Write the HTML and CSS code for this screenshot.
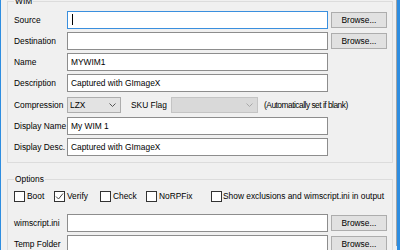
FILE: index.html
```html
<!DOCTYPE html>
<html lang="en">
<head>
<meta charset="UTF-8">
<title>GImageX - Capture</title>
<link rel="stylesheet" href="styles.css">
</head>
<body>
<div class="window">
    <div class="dialog">
        <fieldset class="group group-wim">
            <legend>WIM</legend>
            <div class="row">
                <span class="label">Source</span>
                <div class="textbox focused"><span class="caret"></span></div>
                <button class="browse">Browse...</button>
            </div>
            <div class="row">
                <span class="label">Destination</span>
                <div class="textbox"></div>
                <button class="browse">Browse...</button>
            </div>
            <div class="row">
                <span class="label">Name</span>
                <div class="textbox">MYWIM1</div>
            </div>
            <div class="row">
                <span class="label">Description</span>
                <div class="textbox">Captured with GImageX</div>
            </div>
            <div class="row row-combo">
                <span class="label">Compression</span>
                <div class="combo combo-compression">
                    <span class="combo-text">LZX</span>
                    <svg class="chevron" width="7" height="4" viewBox="0 0 7 4"><polyline points="0.5,0.5 3.5,3.5 6.5,0.5" fill="none" stroke="currentColor" stroke-width="1"/></svg>
                </div>
                <span class="sku-label">SKU Flag</span>
                <div class="combo combo-sku disabled">
                    <span class="combo-text"></span>
                    <svg class="chevron" width="7" height="4" viewBox="0 0 7 4"><polyline points="0.5,0.5 3.5,3.5 6.5,0.5" fill="none" stroke="currentColor" stroke-width="1"/></svg>
                </div>
                <span class="hint">(Automatically set if blank)</span>
            </div>
            <div class="row">
                <span class="label">Display Name</span>
                <div class="textbox">My WIM 1</div>
            </div>
            <div class="row">
                <span class="label">Display Desc.</span>
                <div class="textbox">Captured with GImageX</div>
            </div>
        </fieldset>

        <fieldset class="group group-options">
            <legend>Options</legend>
            <div class="checks">
                <label class="check check-boot"><span class="box"></span>Boot</label>
                <label class="check check-verify"><span class="box checked"><svg width="9" height="9" viewBox="0 0 9 9"><polyline points="1,4.5 3.5,7 8,1.5" fill="none" stroke="currentColor" stroke-width="1"/></svg></span>Verify</label>
                <label class="check check-check"><span class="box"></span>Check</label>
                <label class="check check-norpfix"><span class="box"></span>NoRPFix</label>
                <label class="check check-show"><span class="box"></span>Show exclusions and wimscript.ini in output</label>
            </div>
            <div class="row">
                <span class="label">wimscript.ini</span>
                <div class="textbox"></div>
                <button class="browse">Browse...</button>
            </div>
            <div class="row">
                <span class="label">Temp Folder</span>
                <div class="textbox"></div>
                <button class="browse">Browse...</button>
            </div>
        </fieldset>
    </div>
</div>
</body>
</html>
```

FILE: styles.css
```css
body {
    margin: 0;
    padding: 0;
    font-family: 'Liberation Sans', Arial, sans-serif;
    font-size: 8.4px;
    color: #000;
    background-color: #f0f0f0;
}
.window {
    width: 400px;
    height: 250px;
    box-sizing: border-box;
    border-left: 1px solid #2e8de0;
    border-right: 3px solid #2e8de0;
    background-color: #f0f0f0;
    overflow: hidden;
}
.dialog {
    height: 100%;
    border-right: 1px solid #a3a3a3;
}
.group {
    width: 386px;
    box-sizing: border-box;
    margin: 0 0 0 6px;
    padding: 5px 5px 6px 6px;
    border: 1px solid #dcdcdc;
    min-width: 0;
}
.group legend {
    padding: 0 1px;
    margin-left: 0;
    line-height: 10px;
    height: 10px;
}
.group-wim {
    margin-top: -4px;
}
.group-options {
    margin-top: 11px;
}
.row {
    display: flex;
    align-items: center;
    height: 18px;
    margin-bottom: 3px;
}
.row:last-child {
    margin-bottom: 0;
}
.label {
    width: 53px;
    flex-shrink: 0;
    white-space: nowrap;
}
.textbox {
    width: 261px;
    height: 18px;
    box-sizing: border-box;
    border: 1px solid #8d8d8d;
    background-color: #fff;
    padding-left: 3px;
    line-height: 16px;
    white-space: nowrap;
    overflow: hidden;
}
.textbox.focused {
    border-color: #3a8fde;
}
.caret {
    display: inline-block;
    width: 1px;
    height: 11px;
    margin-left: 1px;
    vertical-align: -2px;
    background-color: #000;
}
.browse {
    width: 56px;
    height: 16px;
    margin-left: 3px;
    padding: 0;
    box-sizing: border-box;
    border: 1px solid #adadad;
    background-color: #e1e1e1;
    font-family: inherit;
    font-size: inherit;
    color: #000;
    line-height: 14px;
}
.row-combo {
    height: 19px;
}
.combo {
    display: flex;
    align-items: center;
    justify-content: space-between;
    height: 16px;
    box-sizing: border-box;
    border: 1px solid #adadad;
    background-color: #e3e3e3;
    padding: 0 4px 0 2px;
}
.combo-compression {
    width: 54px;
}
.combo-compression .chevron {
    color: #555;
}
.combo-sku {
    width: 87px;
}
.combo.disabled {
    border-color: #c4c4c4;
    background-color: #d9d9d9;
}
.combo.disabled .chevron {
    color: #a8a8a8;
}
.sku-label {
    width: 40px;
    margin-left: 10px;
    white-space: nowrap;
}
.hint {
    margin-left: 6px;
    white-space: nowrap;
    letter-spacing: -0.5px;
}
.checks {
    display: flex;
    align-items: center;
    height: 14px;
    margin-bottom: 11px;
}
.check {
    display: flex;
    align-items: center;
    white-space: nowrap;
}
.box {
    display: inline-flex;
    align-items: center;
    justify-content: center;
    width: 11px;
    height: 11px;
    box-sizing: border-box;
    border: 1px solid #333;
    background-color: #fff;
    margin-right: 2px;
    color: #444;
}
.check-boot {
    width: 40px;
}
.check-verify {
    width: 46px;
}
.check-check {
    width: 46px;
}
.check-norpfix {
    width: 65px;
}
.check-show .box {
    margin-right: 1px;
}
```
